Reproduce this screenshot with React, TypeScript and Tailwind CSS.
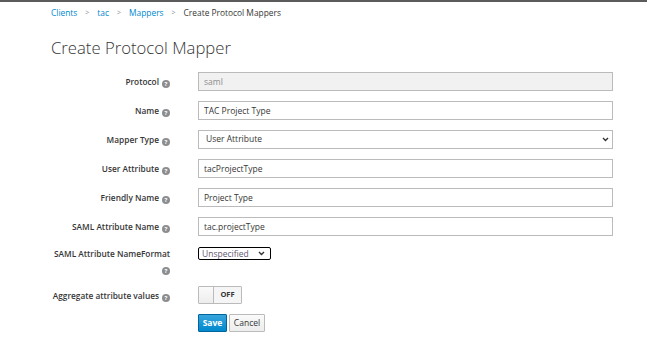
import React from "react";

function Help() {
  return (
    <span className="ml-[3px] inline-flex h-[8px] w-[8px] items-center justify-center rounded-full bg-[#8b8d8f] align-[-1px] text-[6px] font-bold leading-none text-white">
      ?
    </span>
  );
}

function Chevron({ className }: { className?: string }) {
  return (
    <svg className={className} width="7" height="5" viewBox="0 0 7 5" fill="none">
      <path d="M1 1l2.5 2.5L6 1" stroke="#333" strokeWidth="1.4" />
    </svg>
  );
}

function Row({ label, children, tight }: { label: React.ReactNode; children: React.ReactNode; tight?: boolean }) {
  return (
    <div className="flex items-start gap-[28px]">
      <div
        className={
          "w-[120px] text-right text-[8.3px] font-semibold leading-[15px] text-[#363636] " + (tight ? "pt-0" : "pt-[2px]")
        }
      >
        {label}
      </div>
      <div className="w-[415px]">{children}</div>
    </div>
  );
}

function TextInput({ value, disabled }: { value: string; disabled?: boolean }) {
  return (
    <input
      readOnly
      value={value}
      className={
        "block h-[19px] w-full border border-[#bbbbbb] px-[5px] text-[8.5px] outline-none " +
        (disabled ? "bg-[#f1f1f1] text-[#8b8d8f]" : "bg-white text-[#363636]")
      }
    />
  );
}

export default function App() {
  return (
    <div className="min-h-[348px] w-full bg-white font-['Open_Sans',sans-serif]">
      <div className="h-[2px] w-full bg-[#5b5b5b]" />
      <div className="pl-[51px] pt-[3px]">
        <nav className="flex items-center gap-[8px] text-[8.4px] leading-[16px]">
          <a className="text-[#0088ce]">Clients</a>
          <span className="text-[7px] text-[#8b8d8f]">&gt;</span>
          <a className="text-[#0088ce]">tac</a>
          <span className="text-[7px] text-[#8b8d8f]">&gt;</span>
          <a className="text-[#0088ce]">Mappers</a>
          <span className="text-[7px] text-[#8b8d8f]">&gt;</span>
          <span className="text-[#363636]">Create Protocol Mappers</span>
        </nav>
        <h1 className="mt-[16px] text-[16.7px] font-light leading-[22px] text-[#363636]">Create Protocol Mapper</h1>
      </div>

      <form className="mt-[13px] flex flex-col gap-[10px] pl-[50px]">
        <Row label={<>Protocol<Help /></>}>
          <TextInput value="saml" disabled />
        </Row>
        <Row label={<>Name<Help /></>}>
          <TextInput value="TAC Project Type" />
        </Row>
        <Row label={<>Mapper Type<Help /></>}>
          <div className="relative">
            <select className="block h-[19px] w-full appearance-none border border-[#bbbbbb] bg-white px-[7px] text-[8.5px] text-[#363636] outline-none">
              <option>User Attribute</option>
            </select>
            <Chevron className="pointer-events-none absolute right-[4px] top-[7px]" />
          </div>
        </Row>
        <Row label={<>User Attribute<Help /></>}>
          <TextInput value="tacProjectType" />
        </Row>
        <Row label={<>Friendly Name<Help /></>}>
          <TextInput value="Project Type" />
        </Row>
        <Row label={<>SAML Attribute Name<Help /></>}>
          <TextInput value="tac.projectType" />
        </Row>
        <Row tight label={<>SAML Attribute NameFormat <Help /></>}>
          <div className="relative mt-[1px] w-[73px]">
            <select className="block h-[13px] w-full appearance-none rounded-[2px] border border-black bg-white pl-[3px] text-[8.5px] leading-[11px] text-[#5f5870] outline-none">
              <option>Unspecified</option>
            </select>
            <Chevron className="pointer-events-none absolute right-[6px] top-[4px]" />
          </div>
        </Row>
        <Row label={<>Aggregate attribute values<Help /></>}>
          <div className="flex h-[18px] w-[44px] overflow-hidden rounded-[1px] border border-[#bbbbbb]">
            <span className="w-[15px] border-r border-[#bbbbbb] bg-[linear-gradient(#fafafa,#ededed)]" />
            <span className="flex flex-1 items-center justify-center bg-[#f5f5f5] text-[7.5px] font-bold text-[#363636]">
              OFF
            </span>
          </div>
        </Row>
        <Row label="">
          <div className="flex gap-[2px]">
            <button
              type="button"
              className="h-[18px] w-[29px] rounded-[1px] border border-[#00659c] bg-[linear-gradient(#39a5dc,#0088ce)] text-[8.5px] font-bold leading-none text-white"
            >
              Save
            </button>
            <button
              type="button"
              className="h-[18px] w-[36px] rounded-[1px] border border-[#bbbbbb] bg-[linear-gradient(#fafafa,#ededed)] text-[8.5px] leading-none text-[#363636]"
            >
              Cancel
            </button>
          </div>
        </Row>
      </form>
    </div>
  );
}
